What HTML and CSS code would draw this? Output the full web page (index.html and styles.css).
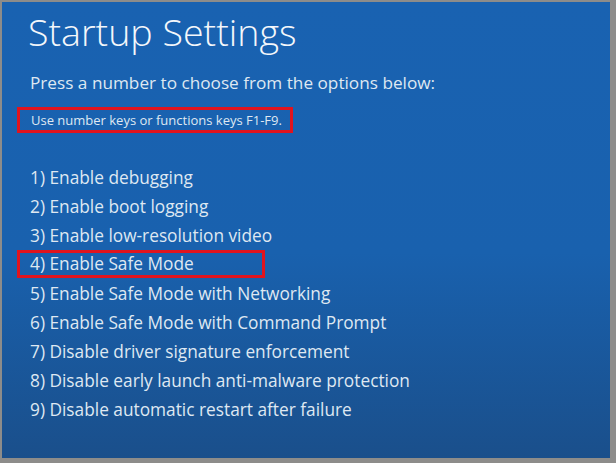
FILE: index.html
```html
<!DOCTYPE html>
<html>
<head>
<meta charset="utf-8">
<link rel="stylesheet" href="styles.css">
</head>
<body>
<div class="screen">
  <h1 class="title">Startup Settings</h1>
  <p class="lead">Press a number to choose from the options below:</p>
  <div class="hint-box"><span class="hint">Use number keys or functions keys F1-F9.</span></div>
  <ol class="options">
    <li class="opt">1) Enable debugging</li>
    <li class="opt">2) Enable boot logging</li>
    <li class="opt">3) Enable low-resolution video</li>
    <li class="opt boxed">4) Enable Safe Mode</li>
    <li class="opt">5) Enable Safe Mode with Networking</li>
    <li class="opt">6) Enable Safe Mode with Command Prompt</li>
    <li class="opt">7) Disable driver signature enforcement</li>
    <li class="opt">8) Disable early launch anti-malware protection</li>
    <li class="opt">9) Disable automatic restart after failure</li>
  </ol>
</div>
</body>
</html>
```
FILE: styles.css
```css
html, body {
  margin: 0;
  padding: 0;
  width: 616px;
  height: 463px;
  overflow: hidden;
  background: #8d8c8a;
}
.screen {
  margin: 2px 0 0 2px;
  width: 608px;
  height: 456px;
  box-sizing: border-box;
  padding: 6px 0 0 26px;
  background: linear-gradient(180deg, #1962b1 0%, #1961ae 55%, #1a4f8b 100%);
  color: #dfe8f2;
  font-family: "Open Sans", "Noto Sans", sans-serif;
}
.title {
  margin: 0;
  font-size: 37.6px;
  font-weight: 300;
  line-height: 48px;
  color: #f4f7fb;
}
.lead {
  margin: 15px 0 0 2px;
  font-size: 17.2px;
  line-height: 24px;
  font-weight: 400;
}
.hint-box {
  margin: 12px 0 0 -11px;
  width: 276px;
  height: 26px;
  box-sizing: border-box;
  border: 3px solid #e0141e;
  padding: 0 0 0 11px;
  display: flex;
  align-items: center;
}
.hint {
  font-size: 13px;
  line-height: 18px;
}
.options {
  list-style: none;
  margin: 30px 0 0 0;
  padding: 0;
}
.opt {
  font-size: 17.3px;
  line-height: 29px;
  height: 29px;
  padding-left: 2px;
}
.boxed {
  margin-left: -11px;
  padding-left: 10px;
  width: 248px;
  height: 28px;
  margin-bottom: 1px;
  box-sizing: border-box;
  border: 3px solid #e0141e;
  line-height: 22px;
}
```
